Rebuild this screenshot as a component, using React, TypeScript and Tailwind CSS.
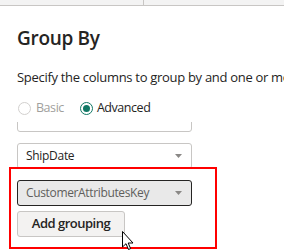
import React from "react";

function Caret() {
  return (
    <svg width="7" height="4" viewBox="0 0 7 4" className="shrink-0">
      <path d="M0 0 L7 0 L3.5 4 Z" fill="#8a8886" />
    </svg>
  );
}

export default function App() {
  return (
    <div
      className="relative w-[284px] h-[252px] overflow-hidden bg-white text-[#252423]"
      style={{ fontFamily: '"Open Sans", "Noto Sans", sans-serif' }}
    >
      <div className="flex h-[6px] bg-[#f3f3f3] border-b border-[#c8c6c4]">
        <div className="w-[144px] border-r border-[#c8c6c4]" />
      </div>
      <div className="pl-[17px]">
        <h1 className="mt-[18px] text-[19px] leading-[28px] font-semibold tracking-[-0.3px]">Group By</h1>
        <p className="mt-[15px] text-[13px] leading-[20px] whitespace-nowrap overflow-hidden tracking-[-0.3px]">
          Specify the columns to group by and one or more outputs.
        </p>
        <div className="mt-[11px] flex items-center h-[20px] text-[12.5px] tracking-[-0.45px]">
          <span className="ml-[1px] w-[13px] h-[13px] rounded-full border border-[#d2d0ce] bg-white" />
          <span className="ml-[5px] text-[#a19f9d]">Basic</span>
          <span className="ml-[16px] w-[13px] h-[13px] rounded-full border border-[#117865] flex items-center justify-center">
            <span className="w-[7px] h-[7px] rounded-full bg-[#117865]" />
          </span>
          <span className="ml-[4px]">Advanced</span>
        </div>
        <div className="mt-[4px] h-[130px] overflow-hidden">
          <div className="-mt-[16px] flex flex-col gap-[11px] w-[175px]">
            <div className="h-[26px] rounded-[3px] border border-[#c8c6c4] bg-white" />
            <div className="h-[26px] rounded-[3px] border border-[#c8c6c4] bg-white flex items-center justify-between pl-[8px] pr-[9px] text-[12px] tracking-[-0.3px]">
              <span>ShipDate</span>
              <Caret />
            </div>
            <div className="h-[26px] rounded-[3px] border border-[#252423] bg-[#e9e9e9] flex items-center justify-between pl-[8px] pr-[9px] text-[12px] text-[#605e5c] tracking-[-0.35px]">
              <span>CustomerAttributesKey</span>
              <Caret />
            </div>
            <button className="-mt-[6px] w-[108px] h-[26px] rounded-[3px] border border-[#c8c6c4] bg-[#f3f2f1] text-[13px] font-semibold tracking-[-0.5px] text-[#252423]">
              Add grouping
            </button>
          </div>
        </div>
      </div>
      <div className="absolute left-[9px] top-[167px] w-[208px] h-[82px] border-2 border-[#ff0000] pointer-events-none" />
      <svg className="absolute left-[122px] top-[231px]" width="13" height="20" viewBox="0 0 13 20">
        <path d="M0.5 0.5 L0.5 16 L4 12.7 L6.5 18.5 L8.6 17.6 L6.2 12 L11 12 Z" fill="#fff" stroke="#000" strokeWidth="1" strokeLinejoin="miter" />
      </svg>
    </div>
  );
}
